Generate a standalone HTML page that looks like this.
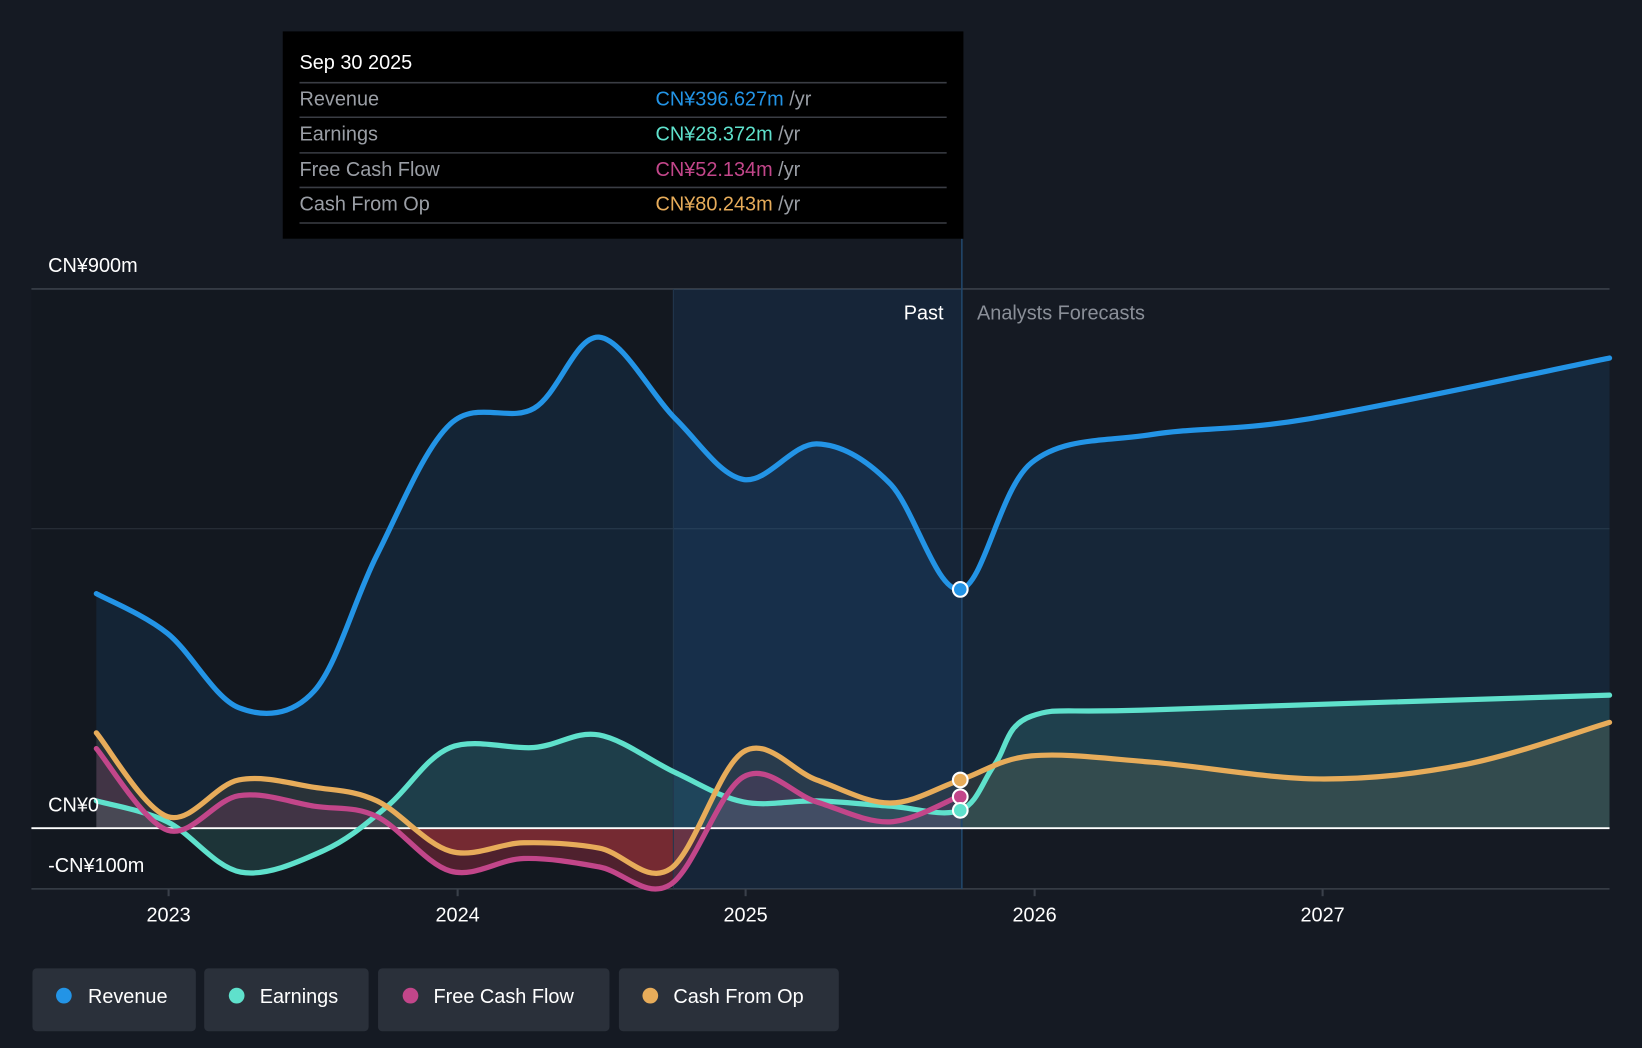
<!DOCTYPE html>
<html><head><meta charset="utf-8"><style>
html,body{margin:0;padding:0;background:#151a23;overflow:hidden}
svg{display:block}
text{font-family:"Liberation Sans",Arial,sans-serif}
</style></head><body>
<svg id="s" width="1642" height="1048" viewBox="0 0 1568 1001" preserveAspectRatio="none" xmlns="http://www.w3.org/2000/svg">
<defs>
<clipPath id="neg"><rect x="0" y="791" width="1568" height="200"/></clipPath>
</defs>
<rect width="1568" height="1001" fill="#151a23"/>
<rect x="30" y="276" width="613" height="573" fill="#131820"/>
<line x1="30" y1="276" x2="1537" y2="276" stroke="#3a404a" stroke-width="1.5"/>
<line x1="30" y1="505" x2="1537" y2="505" stroke="#2c323c" stroke-width="1"/>
<line x1="30" y1="849" x2="1537" y2="849" stroke="#3a404a" stroke-width="1.5"/>
<g id="fills"></g>
<rect x="643" y="276" width="275" height="573" fill="rgba(30,100,170,0.16)"/>
<line x1="643" y1="276" x2="643" y2="849" stroke="#22374d" stroke-width="1"/>
<line x1="918.5" y1="228" x2="918.5" y2="849" stroke="#21466a" stroke-width="1.5"/>
<line x1="30" y1="791" x2="1537" y2="791" stroke="#ffffff" stroke-width="1.8"/>
<g id="lines"></g>
<circle cx="917" cy="563" r="7" fill="#2394e6" stroke="#fff" stroke-width="2"/>
<circle cx="917" cy="745" r="7" fill="#e7ac5a" stroke="#fff" stroke-width="2"/>
<circle cx="917" cy="761" r="7" fill="#c2468a" stroke="#fff" stroke-width="2"/>
<circle cx="917" cy="774" r="7" fill="#5fe1cc" stroke="#fff" stroke-width="2"/>
<text x="46" y="260" fill="#fff" font-size="19">CN¥900m</text>
<text x="46" y="775" fill="#fff" font-size="19">CN¥0</text>
<text x="46" y="833" fill="#fff" font-size="19">-CN¥100m</text>
<text x="901" y="305" fill="#fff" font-size="19" text-anchor="end">Past</text>
<text x="933" y="305" fill="#8a8f98" font-size="19">Analysts Forecasts</text>
<g fill="#fff" font-size="19" text-anchor="middle">
<text x="161" y="880">2023</text><text x="437" y="880">2024</text><text x="712" y="880">2025</text><text x="988" y="880">2026</text><text x="1263" y="880">2027</text></g>
<g stroke="#3a404a" stroke-width="2"><line x1="161" y1="849" x2="161" y2="856"/><line x1="437" y1="849" x2="437" y2="856"/><line x1="712" y1="849" x2="712" y2="856"/><line x1="988" y1="849" x2="988" y2="856"/><line x1="1263" y1="849" x2="1263" y2="856"/></g>
<rect x="270" y="30" width="650" height="198" fill="#000"/>
<text x="286" y="66" fill="#fff" font-size="19">Sep 30 2025</text>
<g stroke="#3a3d44" stroke-width="1.5"><line x1="286" y1="79" x2="904" y2="79"/><line x1="286" y1="112" x2="904" y2="112"/><line x1="286" y1="146" x2="904" y2="146"/><line x1="286" y1="179" x2="904" y2="179"/><line x1="286" y1="213" x2="904" y2="213"/></g>
<g font-size="19" fill="#9a9ea5">
<text x="286" y="101">Revenue</text><text x="286" y="134">Earnings</text><text x="286" y="168">Free Cash Flow</text><text x="286" y="201">Cash From Op</text></g>
<g font-size="19">
<text x="626" y="101"><tspan fill="#2394e6">CN¥396.627m</tspan><tspan fill="#9a9ea5"> /yr</tspan></text>
<text x="626" y="134"><tspan fill="#5fe1cc">CN¥28.372m</tspan><tspan fill="#9a9ea5"> /yr</tspan></text>
<text x="626" y="168"><tspan fill="#c2468a">CN¥52.134m</tspan><tspan fill="#9a9ea5"> /yr</tspan></text>
<text x="626" y="201"><tspan fill="#e7ac5a">CN¥80.243m</tspan><tspan fill="#9a9ea5"> /yr</tspan></text></g>
<g>
<rect x="31" y="925" width="156" height="60" rx="4" fill="#2a303a"/><circle cx="61" cy="951" r="7.5" fill="#2394e6"/><text x="84" y="958" fill="#fff" font-size="19">Revenue</text>
<rect x="195" y="925" width="157" height="60" rx="4" fill="#2a303a"/><circle cx="226" cy="951" r="7.5" fill="#5fe1cc"/><text x="248" y="958" fill="#fff" font-size="19">Earnings</text>
<rect x="361" y="925" width="221" height="60" rx="4" fill="#2a303a"/><circle cx="392" cy="951" r="7.5" fill="#c2468a"/><text x="414" y="958" fill="#fff" font-size="19">Free Cash Flow</text>
<rect x="591" y="925" width="210" height="60" rx="4" fill="#2a303a"/><circle cx="621" cy="951" r="7.5" fill="#e7ac5a"/><text x="643" y="958" fill="#fff" font-size="19">Cash From Op</text>
</g>
</svg>
<script>
function cr(p){let d="M"+p[0][0]+","+p[0][1];for(let i=0;i<p.length-1;i++){const p0=p[i-1]||p[i],p1=p[i],p2=p[i+1],p3=p[i+2]||p2;const t=6;d+=" C"+(p1[0]+(p2[0]-p0[0])/t)+","+(p1[1]+(p2[1]-p0[1])/t)+" "+(p2[0]-(p3[0]-p1[0])/t)+","+(p2[1]-(p3[1]-p1[1])/t)+" "+p2[0]+","+p2[1];}return d;}
const S={
rev:{c:"#2394e6",f:"rgba(33,120,200,0.13)",p:[[92,567],[160,605],[228,676],[300,660],[360,530],[430,405],[510,390],[572,322],[645,400],[710,458],[780,424],[850,462],[917,563],[985,442],[1100,415],[1250,400],[1537,342]]},
earn:{c:"#5fe1cc",f:"rgba(95,225,204,0.14)",p:[[92,765],[160,785],[230,833],[310,812],[370,770],[430,714],[510,714],[572,702],[645,738],[710,766],[780,765],[850,770],[917,774],[950,730],[985,684],[1100,678],[1537,664]]},
fcf:{c:"#c2468a",f:"rgba(194,70,138,0.16)",p:[[92,715],[160,793],[228,760],[300,770],[360,780],[430,832],[500,820],[572,828],[640,845],[710,742],[780,766],[850,785],[917,760]]},
cfo:{c:"#e7ac5a",f:"rgba(231,172,90,0.1)",p:[[92,700],[160,780],[228,745],[300,752],[360,765],[430,813],[500,805],[572,810],[640,830],[710,718],[780,745],[850,767],[917,745],[985,722],[1100,728],[1260,744],[1400,730],[1537,690]]}};
const F=document.getElementById("fills"),L=document.getElementById("lines"),ns="http://www.w3.org/2000/svg";
for(const k of ["rev","earn","cfo","fcf"]){const s=S[k],d=cr(s.p),last=s.p[s.p.length-1],first=s.p[0];
const a=document.createElementNS(ns,"path");a.setAttribute("d",d+" L"+last[0]+",791 L"+first[0]+",791 Z");a.setAttribute("fill",s.f);F.appendChild(a);
if(k=="fcf"||k=="cfo"){const b=document.createElementNS(ns,"path");b.setAttribute("d",d+" L"+last[0]+",791 L"+first[0]+",791 Z");b.setAttribute("fill","rgba(200,40,40,0.22)");b.setAttribute("clip-path","url(#neg)");F.appendChild(b);}
const l=document.createElementNS(ns,"path");l.setAttribute("d",d);l.setAttribute("fill","none");l.setAttribute("stroke",s.c);l.setAttribute("stroke-width","5");l.setAttribute("stroke-linecap","round");L.appendChild(l);}
</script>
</body></html>
